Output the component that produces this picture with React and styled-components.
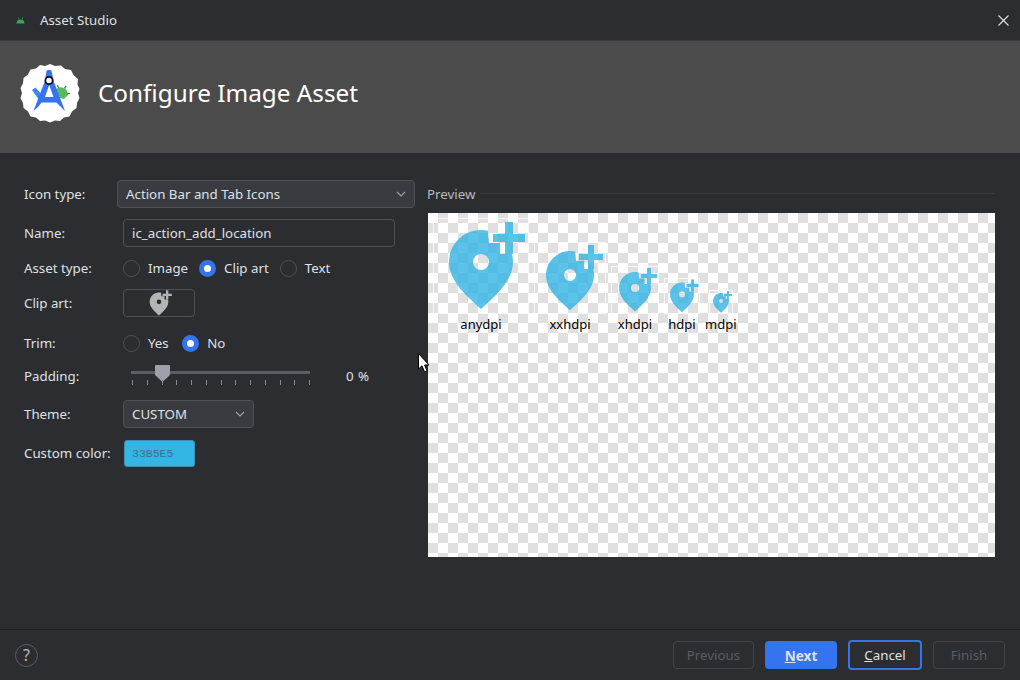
import React from 'react';
import styled, { createGlobalStyle } from 'styled-components';

const BLUE = '#3574f0';
const FONT = '"Noto Sans", "Open Sans", sans-serif';

const Pin = ({ size, color = '#33b5e5' }) => (
  <svg width={size} height={size} viewBox="0 0 24 24">
    <path
      fill={color}
      fillRule="evenodd"
      d="M13.75 3.2 L14 6.25 H16.75 V9 H19.75 C19.9 9.6 20 10.3 20 11 C20 16 15 20 12 22.75 C9 20 4 16 4 11 C4 6.6 7.6 3 12 3 C12.6 3 13.2 3.05 13.75 3.2 Z M12 9 A2 2 0 1 0 12 13 A2 2 0 1 0 12 9 Z"
    />
    <path fill={color} d="M18 1 H20 V4 H23 V6 H20 V9 H18 V6 H15 V4 H18 Z" />
  </svg>
);

const Chevron = () => (
  <svg width="10" height="6" viewBox="0 0 10 6" fill="none">
    <path d="M1 1 L5 5 L9 1" stroke="#9da0a8" strokeWidth="1.1" />
  </svg>
);

const AndroidHead = () => (
  <svg width="11" height="7" viewBox="0 0 12 8">
    <path
      fill="#3ba55d"
      d="M1.2 7.5 C1.4 4.6 3.2 2.8 6 2.8 C8.8 2.8 10.6 4.6 10.8 7.5 Z M2.9 0.6 L3.5 0.3 L4.6 2.4 L4 2.8 Z M9.1 0.6 L8.5 0.3 L7.4 2.4 L8 2.8 Z"
    />
  </svg>
);

const StudioLogo = () => (
  <svg width="60" height="60" viewBox="0 0 60 60">
    <path
      fill="#fff"
      d="M30 1 L35 3 L41 2.5 L45 6 L51 7 L53.5 12 L58 16 L57.5 21.5 L59.5 26 L58 30 L59.5 35 L57 40 L56.5 45 L52 48.5 L49.5 53.5 L44 54.5 L40 58 L35 57.5 L30 59.5 L25 57.5 L20 58 L16 54.5 L10.5 53.5 L8 48.5 L3.5 45 L3 40 L0.5 35 L2 30 L0.5 25 L3 20.5 L3.5 15 L8 11.5 L10.5 6.5 L16 5.5 L20 2 L25 3 Z"
    />
    <path fill="#58b95d" d="M36 27 C37 23.5 44 23 47 28 L48 32 L44 36 L40 35 Z" />
    <path fill="#2f7d3a" d="M38 25 L36.8 22.5 L37.8 22 L39.2 24.5 Z M44 25 L45.5 22.5 L46.5 23 L45 26 Z M47 30 H50 V31 H47 Z" />
    <path fill="#3f86f5" d="M12 27 L15.5 24.5 L24 34 L20.5 39 Z" />
    <path
      fill="#3574f0"
      fillRule="evenodd"
      d="M26.5 8 C27.5 6.8 30.5 6.8 31.5 8 L34 19 L45 48 L40 43 L36.5 39.5 H21.5 L18 44 L13.5 48 L24.5 19 Z M25 34 H33.5 L29.2 22 Z"
    />
    <circle cx="29" cy="17.5" r="3.6" fill="#fff" stroke="#111" strokeWidth="1.7" />
  </svg>
);

const ArrowCursor = () => (
  <svg width="12" height="20" viewBox="0 0 12 20">
    <path fill="#fff" stroke="#000" strokeWidth="1" d="M0.5 0.5 V16 L4 12.8 L6.5 18.8 L9 17.8 L6.6 12 H11 Z" />
  </svg>
);

const icons = [
  { label: 'anydpi', size: 96 },
  { label: 'xxhdpi', size: 72 },
  { label: 'xhdpi', size: 48 },
  { label: 'hdpi', size: 36 },
  { label: 'mdpi', size: 24 },
];

const ticks = Array.from({ length: 13 }, (_, i) => i);

const App = () => (
  <>
    <GlobalStyle />
    <Window>
      <TitleBar>
        <AndroidHead />
        <TitleText>Asset Studio</TitleText>
        <CloseButton>
          <svg width="11" height="11" viewBox="0 0 11 11">
            <path d="M0.5 0.5 L10.5 10.5 M10.5 0.5 L0.5 10.5" stroke="#dfe1e5" strokeWidth="1.1" />
          </svg>
        </CloseButton>
      </TitleBar>

      <Banner>
        <StudioLogo />
        <BannerTitle>Configure Image Asset</BannerTitle>
      </Banner>

      <Body>
        <Form>
          <Row>
            <Label>Icon type:</Label>
            <Select $width={298} $offset={-6}>
              Action Bar and Tab Icons
              <Chevron />
            </Select>
          </Row>
          <Row $gap={11}>
            <Label>Name:</Label>
            <Input>ic_action_add_location</Input>
          </Row>
          <Row $gap={7}>
            <Label>Asset type:</Label>
            <RadioGroup $gap={11}>
              <Radio>Image</Radio>
              <Radio $on>Clip art</Radio>
              <Radio>Text</Radio>
            </RadioGroup>
          </Row>
          <Row $gap={7}>
            <Label>Clip art:</Label>
            <ClipButton>
              <Pin size={28} color="#b4b4b4" />
            </ClipButton>
          </Row>
          <Row $gap={12}>
            <Label>Trim:</Label>
            <RadioGroup $gap={13.5}>
              <Radio>Yes</Radio>
              <Radio $on>No</Radio>
            </RadioGroup>
          </Row>
          <Row $gap={5}>
            <Label>Padding:</Label>
            <Slider>
              <Track />
              <Thumb viewBox="0 0 15 17" width="15" height="17">
                <path fill="#9da0a8" d="M0 1 Q0 0 1 0 H14 Q15 0 15 1 V10 L7.5 17 L0 10 Z" />
              </Thumb>
              <Ticks>
                {ticks.map((t) => (
                  <Tick key={t} />
                ))}
              </Ticks>
            </Slider>
            <Percent>0 %</Percent>
          </Row>
          <Row $gap={10}>
            <Label>Theme:</Label>
            <Select $width={131}>
              CUSTOM
              <Chevron />
            </Select>
          </Row>
          <Row $gap={11}>
            <Label>Custom color:</Label>
            <Swatch>33B5E5</Swatch>
          </Row>
        </Form>

        <PreviewPane>
          <PreviewHead>
            <PreviewTitle>Preview</PreviewTitle>
            <HeadLine />
          </PreviewHead>
          <Canvas>
            {icons.map((icon) => (
              <IconColumn key={icon.label}>
                <IconBox $size={icon.size}>
                  <Pin size={icon.size} />
                </IconBox>
                <IconLabel>{icon.label}</IconLabel>
              </IconColumn>
            ))}
          </Canvas>
        </PreviewPane>
      </Body>

      <Footer>
        <Help>?</Help>
        <Actions>
          <Button $width={81} disabled>Previous</Button>
          <Button $width={72} $primary><u>N</u>ext</Button>
          <Button $width={74} $focused><u>C</u>ancel</Button>
          <Button $width={72} disabled>Finish</Button>
        </Actions>
      </Footer>

      <CursorSpot>
        <ArrowCursor />
      </CursorSpot>
    </Window>
  </>
);

export default App;

const GlobalStyle = createGlobalStyle`
  html, body {
    margin: 0;
    padding: 0;
    background: #2b2d30;
  }
  *, *::before, *::after {
    box-sizing: border-box;
  }
`;

const Window = styled.div`
  position: relative;
  width: 1020px;
  height: 680px;
  display: flex;
  flex-direction: column;
  background: #2b2d30;
  color: #dfe1e5;
  font-family: ${FONT};
  font-size: 13.3px;
  overflow: hidden;
`;

const TitleBar = styled.div`
  height: 41px;
  flex: none;
  display: flex;
  align-items: center;
  padding-left: 15px;
  border-bottom: 1px solid #393b40;
`;

const TitleText = styled.div`
  margin-left: 14px;
`;

const CloseButton = styled.div`
  margin-left: auto;
  margin-right: 11px;
  display: flex;
`;

const Banner = styled.div`
  height: 112px;
  flex: none;
  display: flex;
  align-items: center;
  gap: 18px;
  padding: 0 0 8px 20px;
  background: #4b4b4b;
`;

const BannerTitle = styled.div`
  font-size: 24.3px;
  line-height: 30px;
  color: #fff;
`;

const Body = styled.div`
  flex: 1;
  display: flex;
  padding: 27px 25px 0 24px;
  min-height: 0;
`;

const Form = styled.div`
  width: 404px;
  flex: none;
  display: flex;
  flex-direction: column;
`;

const Row = styled.div`
  height: 28px;
  flex: none;
  margin-top: ${(p) => p.$gap || 0}px;
  display: flex;
  align-items: center;
`;

const Label = styled.div`
  width: 99px;
  flex: none;
`;

const Select = styled.div`
  width: ${(p) => p.$width}px;
  height: 28px;
  margin-left: ${(p) => p.$offset || 0}px;
  display: flex;
  align-items: center;
  justify-content: space-between;
  padding: 0 8px;
  background: #393b40;
  border: 1px solid #4e5157;
  border-radius: 4px;
`;

const Input = styled.div`
  width: 272px;
  height: 28px;
  display: flex;
  align-items: center;
  padding: 0 8px;
  border: 1px solid #4e5157;
  border-radius: 4px;
`;

const RadioGroup = styled.div`
  display: flex;
  gap: ${(p) => p.$gap}px;
`;

const Radio = styled.div`
  display: flex;
  align-items: center;
  gap: 8px;

  &::before {
    content: '';
    flex: none;
    width: 17px;
    height: 17px;
    border-radius: 50%;
    border: ${(p) => (p.$on ? `5.5px solid ${BLUE}` : '1px solid #4e5157')};
    background: ${(p) => (p.$on ? '#fff' : 'transparent')};
  }
`;

const ClipButton = styled.div`
  width: 72px;
  height: 28px;
  display: flex;
  align-items: center;
  justify-content: center;
  border: 1px solid #4e5157;
  border-radius: 4px;
`;

const Slider = styled.div`
  position: relative;
  width: 179px;
  height: 26px;
  margin-left: 8px;
`;

const Track = styled.div`
  position: absolute;
  top: 8px;
  left: 0;
  right: 0;
  height: 3px;
  background: #5a5d63;
`;

const Thumb = styled.svg`
  position: absolute;
  top: 2px;
  left: 24px;
`;

const Ticks = styled.div`
  position: absolute;
  top: 17px;
  left: 1px;
  right: 0;
  display: flex;
  justify-content: space-between;
`;

const Tick = styled.div`
  width: 1px;
  height: 5px;
  background: #868a91;
`;

const Percent = styled.div`
  margin-left: 36px;
  word-spacing: 1px;
`;

const Swatch = styled.div`
  width: 71px;
  height: 27px;
  margin-left: 1px;
  display: flex;
  align-items: center;
  padding-left: 7px;
  background: #33b5e5;
  border: 1px solid #3d8fb0;
  border-radius: 3px;
  color: #3f7088;
  font-family: "Liberation Mono", monospace;
  font-size: 11.5px;
`;

const PreviewPane = styled.div`
  width: 567px;
  flex: none;
  display: flex;
  flex-direction: column;
`;

const PreviewHead = styled.div`
  display: flex;
  align-items: center;
  gap: 5px;
  height: 27px;
  margin-bottom: 6px;
  color: #b8bac0;
`;

const PreviewTitle = styled.span`
  margin-left: -1px;
`;

const HeadLine = styled.div`
  flex: 1;
  height: 1px;
  background: #393b40;
`;

const Canvas = styled.div`
  height: 344px;
  display: flex;
  align-items: flex-start;
  gap: 5px;
  padding: 0 5px;
  background: repeating-conic-gradient(#e0e0e0 0 25%, #fff 0 50%) 0 0 / 20px 20px;
`;

const IconColumn = styled.div`
  height: 120px;
  display: flex;
  flex-direction: column;
  justify-content: flex-end;
  align-items: center;
`;

const IconBox = styled.div`
  width: ${(p) => p.$size}px;
  height: ${(p) => p.$size}px;
  outline: 1px solid #fff;
  outline-offset: -1px;
  opacity: 0.8;
  svg {
    display: block;
  }
`;

const IconLabel = styled.div`
  height: 18px;
  margin-top: 1px;
  color: #000;
  font-size: 13px;
  line-height: 18px;
`;

const Footer = styled.div`
  height: 51px;
  flex: none;
  display: flex;
  align-items: center;
  justify-content: space-between;
  padding: 0 15px;
  border-top: 1px solid #1e1f22;
`;

const Help = styled.div`
  width: 23px;
  height: 23px;
  display: flex;
  align-items: center;
  justify-content: center;
  border: 1px solid #5a5d63;
  border-radius: 50%;
  color: #b8bac0;
  font-size: 16px;
`;

const Actions = styled.div`
  display: flex;
  align-items: center;
  gap: 11px;
`;

const Button = styled.button`
  width: ${(p) => p.$width}px;
  height: ${(p) => (p.$focused ? 30 : 28)}px;
  padding: 0;
  font-family: ${FONT};
  font-size: ${(p) => (p.$primary ? 13.6 : 13.3)}px;
  font-weight: ${(p) => (p.$primary ? 700 : 400)};
  color: ${(p) => (p.disabled ? '#5a5d63' : '#dfe1e5')};
  background: ${(p) => (p.$primary ? BLUE : 'transparent')};
  border: ${(p) => (p.$focused ? `2px solid ${BLUE}` : p.$primary ? 'none' : '1px solid #43454a')};
  border-radius: 4px;
`;

const CursorSpot = styled.div`
  position: absolute;
  left: 418px;
  top: 353px;
  display: flex;
`;
